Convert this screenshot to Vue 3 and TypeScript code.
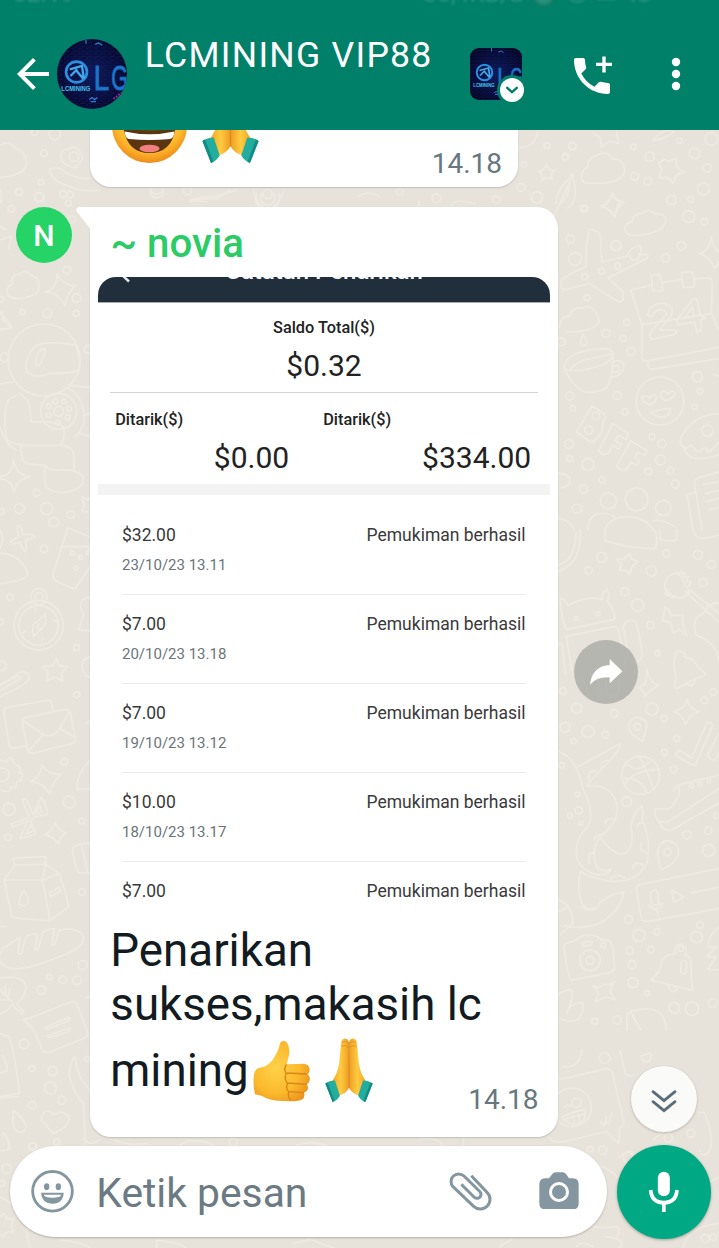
<script setup lang="ts">
interface Withdrawal {
  amount: string
  date?: string
}
interface DoodleGroup {
  x: number
  y: number
  paths: string[]
  dots: number[][]
}

const withdrawals: Withdrawal[] = [
  { amount: '$32.00', date: '23/10/23 13.11' },
  { amount: '$7.00', date: '20/10/23 13.18' },
  { amount: '$7.00', date: '19/10/23 13.12' },
  { amount: '$10.00', date: '18/10/23 13.17' },
  { amount: '$7.00' },
]

// Wallpaper line art, drawn in third-of-a-pixel units from each group's origin.
const doodles: DoodleGroup[] = [
  {
    x: 0,
    y: 0,
    paths: [
      'M0 436Q28 420 45 444Q76 452 80 490Q74 528 0 532',
      'M182 470Q182 446 206 448Q226 432 240 456Q256 470 238 490Q226 514 206 496Q186 494 182 470Z',
      'M150 508Q180 496 200 520Q240 540 268 536M150 508Q150 540 200 556Q250 580 300 570',
      'M570 600Q600 590 650 588L710 570M570 600L620 606',
      'M770 580A36 36 0 1 0 836 580M784 582A22 22 0 1 0 822 582',
    ],
    dots: [[164, 402, 17], [132, 460, 10], [222, 470, 14], [56, 575, 10], [123, 547, 8], [117, 592, 13], [470, 575, 19], [562, 572, 12], [189, 582, 10], [803, 582, 14], [104, 396, 10]],
  },
  {
    x: 359,
    y: 0,
    paths: [
      'M480 443Q530 442 537 392',
      'M590 610Q596 560 632 538L640 518L644 544Q660 600 626 624M604 612Q628 590 632 556',
      'M180 600V620M276 616Q290 594 350 612M412 586',
      'M0 590Q20 570 60 588M536 514Q556 516 562 492Q568 514 588 510Q572 522 580 538Q564 526 548 542Q556 522 536 514Z',
      'M742 606Q756 602 760 580Q766 602 790 604Q772 612 776 630',
    ],
    dots: [[564, 437, 9], [640, 438, 11], [495, 493, 8], [619, 470, 10], [486, 562, 12], [534, 592, 17], [122, 575, 10], [232, 594, 13], [412, 599, 11], [676, 625, 8]],
  },
  {
    x: 550,
    y: 130,
    paths: [
      'M128 10L150 22L154 52L178 34L206 40L200 8M308 32Q330 0 364 0M308 32Q350 26 372 4',
      'M102 158Q82 130 112 112Q112 82 144 74Q176 60 188 88Q220 84 224 120Q222 154 160 159Q120 162 102 158Z',
      'M343 88L358 94L379 84L380 110L402 126L380 134L370 160L352 142L327 144L336 120L326 98Z',
      'M152 230Q180 224 187 188Q192 216 222 218Q198 230 194 262Q184 236 152 230Z',
      'M230 310Q214 286 246 274Q250 250 276 250Q298 232 312 252Q346 248 348 272Q340 304 290 312Q250 322 230 310Z',
      'M118 300Q124 294 144 306Q154 316 152 352L156 396L232 378Q240 350 268 348Q280 352 268 374Q302 370 292 384L174 444L218 484Q226 516 206 516Q160 488 118 460L44 480Q28 472 36 448Q56 432 108 410Q106 350 118 300ZM240 378Q240 394 262 390L272 372',
      'M242 480L302 466M338 458L394 448M434 446L482 444Q488 450 486 480L484 550L276 584L242 480M276 584V684Q278 694 296 692L506 652M296 692Q290 714 304 718L506 686M484 550L506 600',
      'M304 440Q300 436 328 432Q340 470 338 480Q320 486 308 480ZM394 430Q400 424 426 426Q438 450 432 470Q410 476 400 470Z',
      'M292 556Q300 520 336 520Q370 524 366 552L330 600L378 600Q384 610 372 614L306 628Q294 620 304 604L350 552Q346 538 330 538Q316 540 306 560ZM430 506L380 570L384 584L434 576L440 606L452 602V570L466 564L450 556L442 508ZM428 530L402 566L430 560Z',
      'M28 594Q30 560 58 558Q66 530 100 534Q114 522 130 540Q152 560 146 578Q126 606 50 606M98 614Q114 628 110 642Q100 652 90 640Z',
      'M42 710Q50 670 120 660Q184 650 188 670Q194 700 110 718Q40 728 42 710ZM60 720Q80 690 130 684Q160 678 184 672M42 712Q60 760 98 784Q130 794 170 774Q188 750 188 676M190 696Q214 686 222 704Q220 736 182 744M192 708Q210 702 206 722Q200 728 188 726',
      'M302 824Q276 818 276 800Q294 796 300 804Q310 788 320 800Q322 812 302 824ZM346 812Q326 800 334 786Q348 780 354 792Q366 776 376 790Q370 808 346 812ZM304 846Q330 838 360 834Q366 850 346 860Q318 866 304 846Z',
      'M126 828L160 850Q172 864 158 880Q160 910 140 926Q130 940 118 934L80 906ZM188 880L236 912L228 928L206 916L196 932L214 944L206 958L188 946L176 968Q160 980 146 962ZM242 932L292 962L284 976L262 968L254 982L268 994L260 1006L244 996L228 1020Q212 1026 200 1008Z',
      'M506 852Q440 850 400 910Q380 940 402 950Q410 990 450 986Q484 984 506 974M402 950Q410 960 420 946Q434 950 436 962Q448 972 456 956Q470 950 474 966Q486 962 506 936',
      'M506 1026L444 1044Q430 1050 434 1068L456 1200M436 1086L414 1094Q408 1100 414 1110L428 1200M460 1064L506 1056M466 1090L506 1082M470 1114L506 1106M476 1140L506 1132',
      'M24 1030Q60 1030 60 1052Q58 1074 24 1074M114 1200Q112 1156 150 1150Q180 1148 196 1164M310 1172Q340 1166 374 1190M164 1200Q180 1160 234 1160Q290 1164 310 1200M24 1164Q60 1170 74 1200',
      'M450 370Q480 362 484 320Q490 360 506 364M450 370Q484 386 494 416L506 396M0 280Q20 240 60 156M486 732L506 738',
    ],
    dots: [[67, 47, 11], [46, 82, 9], [250, 50, 8], [389, 32, 8], [299, 80, 14], [434, 70, 16], [484, 27, 19], [471, 114, 12], [254, 139, 12], [293, 154, 12], [460, 177, 18], [364, 210, 14], [422, 208, 9], [416, 260, 18], [463, 275, 10], [102, 236, 11], [61, 327, 12], [198, 347, 15], [75, 387, 19], [394, 347, 13], [347, 384, 12], [104, 440, 9], [155, 423, 9], [203, 408, 9], [111, 503, 9], [230, 577, 9], [168, 610, 12], [219, 626, 9], [243, 664, 12], [34, 635, 12], [330, 813, 72], [442, 740, 15], [450, 784, 8], [434, 830, 8], [59, 798, 12], [69, 835, 8], [202, 797, 12], [225, 845, 9], [138, 857, 11], [116, 900, 12], [57, 942, 13], [59, 986, 9], [114, 1003, 18], [306, 920, 9], [336, 941, 12], [332, 990, 15], [295, 1024, 10], [361, 1022, 10], [156, 1050, 9], [376, 1062, 12], [100, 1077, 12], [80, 1136, 14], [175, 1113, 24], [260, 1108, 34], [340, 1134, 23], [472, 902, 17]],
  },
  {
    x: 550,
    y: 530,
    paths: [
      'M24 124Q92 100 90 20V0M24 106Q76 90 78 10M164 0V32Q240 56 316 56Q326 20 314 0M328 0L332 28Q356 36 380 30V0M430 0Q434 26 460 26L506 16',
      'M238 70L244 86L264 94L246 110L240 132L226 120L208 122L214 104L200 86L220 88Z',
      'M30 206Q40 200 54 226Q110 196 156 208Q156 180 172 180Q180 190 172 214Q196 240 194 268L50 298Q36 280 30 206ZM48 320L190 290Q206 290 210 320L226 400Q230 428 212 428M48 320L66 420M24 340L36 342L46 430M220 290Q226 268 250 272Q264 270 276 370Q276 396 256 394Q236 396 234 370ZM90 450Q106 444 116 500Q144 520 152 490L140 444M170 450Q164 500 190 498Q216 490 206 450',
      'M344 172Q346 128 386 130L406 164L418 186Q400 214 372 200Q350 196 344 172ZM406 184L506 276M420 180L506 250M386 136L394 124L404 132L400 144L414 140L410 156L424 156L416 168M352 180L344 192L356 198L360 188L366 204L376 196M506 218Q470 220 466 244Q456 256 440 262Q426 290 440 316Q500 340 506 392',
      'M346 230L358 244L364 256L400 256L398 280L410 318L388 298L370 310L362 278L338 272Z',
      'M376 380Q372 362 394 364Q408 368 404 382Q430 380 446 414L468 432Q460 440 436 446L380 476Q372 470 378 440Q366 400 376 380ZM410 460Q420 472 432 462L436 446',
      'M266 472Q296 466 290 418Q300 462 328 466Q300 478 286 500Q282 480 266 472ZM372 544Q404 538 412 508Q416 538 448 544Q418 554 406 584Q402 558 372 544Z',
      'M278 634Q240 614 236 594Q236 564 264 562Q292 566 290 592ZM334 1020Q324 990 322 970Q326 934 354 932Q388 940 386 972Q376 1002 334 1020Z',
      'M376 674L388 660L424 684L472 578Q484 574 488 586L436 706Q410 700 376 674ZM506 610L472 676Q480 690 496 690L506 668',
      'M226 696Q260 736 300 694M226 760Q250 720 330 718M268 680Q300 740 310 780M220 746Q270 740 290 788',
      'M372 780L382 766Q440 750 506 736M382 766Q394 780 384 800Q370 834 350 838L318 836Q306 850 330 880Q340 900 360 902L506 820M330 874L350 878L506 776',
      'M80 712Q140 680 208 642Q220 650 160 712Q130 740 110 768Q190 760 202 830Q204 880 150 920Q120 960 140 1010Q160 1030 182 1018Q180 1036 140 1034Q90 1020 80 980Q74 930 108 896Q140 860 100 780Q80 680 24 664M150 920Q190 980 226 970Q256 950 242 890Q250 846 276 828Q280 850 276 870Q306 930 290 1000Q260 1060 180 1054Q120 1044 92 1024Q80 1060 94 1120Q130 1160 150 1118Q180 1090 222 1086Q210 1150 140 1184Q80 1200 42 1186',
      'M154 712Q154 690 174 692M116 748Q114 720 138 722M166 880Q170 860 198 870M132 930Q136 912 160 914M118 1000Q110 970 132 968M180 1052Q194 1024 226 1044M248 1014Q254 990 280 1006M288 968Q264 960 274 938M262 890Q264 876 280 880M92 1130Q110 1144 128 1134M24 1108Q70 1130 68 1180L32 1214M24 1146Q44 1140 54 1126',
      'M268 1064L506 1016M268 1064Q256 1070 260 1086L274 1164Q276 1176 296 1174L506 1136M314 1080Q326 1080 324 1104L328 1122Q318 1130 306 1122L302 1100Q300 1082 314 1080ZM296 1124Q320 1154 338 1120M320 1136L324 1150M364 1080L402 1102L372 1116ZM424 1088L506 1072',
      'M48 1240L82 1230L90 1220Q116 1210 144 1220L150 1228L176 1232Q190 1236 194 1314Q192 1326 170 1330L66 1350Q54 1350 42 1256Q42 1244 48 1240ZM94 1240Q110 1232 126 1236Q130 1244 116 1246Q100 1252 94 1240Z',
      'M376 1272Q372 1242 394 1242Q414 1250 406 1274Q426 1280 424 1310Q424 1350 428 1382L302 1350Q330 1330 334 1300Q340 1272 376 1272ZM354 1366Q368 1400 382 1374M394 1296Q404 1286 410 1298Q412 1320 404 1332Q388 1334 392 1318Z',
      'M130 1366Q150 1378 164 1362Q182 1370 192 1354Q182 1380 180 1386Q190 1400 196 1410Q176 1400 164 1402Q150 1410 136 1416Q146 1394 144 1386Z',
      'M24 1394Q50 1376 66 1382Q70 1410 50 1450Q60 1420 96 1416Q106 1440 84 1468Q60 1480 30 1466M232 1500Q226 1446 242 1444Q300 1426 330 1450Q350 1470 348 1500M272 1500Q256 1470 242 1446M506 1192Q470 1220 476 1252L500 1250L470 1280L498 1282L474 1318L506 1320',
    ],
    dots: [[349, 70, 11], [444, 74, 13], [483, 103, 12], [155, 82, 15], [116, 121, 11], [304, 123, 15], [460, 158, 12], [225, 185, 12], [263, 225, 18], [301, 285, 11], [79, 265, 6], [144, 252, 6], [323, 370, 8], [39, 483, 10], [489, 486, 10], [463, 511, 10], [80, 535, 15], [193, 550, 11], [306, 537, 18], [342, 566, 9], [45, 592, 15], [114, 605, 18], [166, 614, 10], [71, 633, 8], [262, 590, 10], [380, 626, 9], [343, 667, 9], [272, 736, 57], [371, 718, 10], [36, 706, 8], [230, 815, 15], [83, 793, 7], [86, 841, 11], [60, 857, 7], [93, 880, 6], [411, 915, 12], [475, 902, 11], [476, 961, 18], [353, 966, 11], [424, 767, 6], [450, 762, 6], [476, 753, 6], [498, 857, 8], [236, 1168, 12], [267, 1216, 18], [321, 1205, 9], [239, 1262, 11], [303, 1259, 10], [246, 1304, 12], [249, 1358, 15], [291, 1389, 7], [120, 1291, 31], [120, 1291, 12], [160, 1245, 7], [392, 1256, 8], [440, 1221, 17], [450, 1185, 10], [373, 1433, 16], [426, 1436, 20], [488, 1419, 13], [134, 1474, 9], [201, 1470, 12]],
  },
  {
    x: 0,
    y: 190,
    paths: [
      'M26 318Q12 296 34 284Q34 252 60 252Q78 236 92 256Q120 266 116 286Q120 316 70 324Q40 330 26 318Z',
      'M134 306Q170 300 172 252Q190 290 228 286Q202 304 194 348Q174 306 134 306Z',
      'M0 150L34 138L26 176M0 110L20 120M0 366Q24 392 36 414L0 418M0 0Q10 20 0 40',
      'M450 0Q470 24 490 0M570 36Q600 24 650 26L690 0M760 0Q770 40 790 50M850 0Q850 20 822 50',
    ],
    dots: [[201, 240, 11], [230, 324, 13], [68, 366, 8], [142, 370, 13], [229, 370, 9], [210, 14, 10], [118, 22, 14], [57, 6, 10], [205, 40, 9], [216, 88, 10], [34, 56, 10], [4, 328, 8]],
  },
  {
    x: 0,
    y: 260,
    paths: [
      'M80 334Q70 290 110 256Q150 240 226 256Q246 300 236 332Q200 342 150 340Q100 360 80 334ZM108 300Q110 270 134 266Q140 276 130 290Q122 316 110 318Q106 314 108 300Z',
      'M0 372L38 366M206 376L270 382M206 386Q240 400 250 450Q260 500 226 530M48 408Q20 410 16 450Q12 520 22 540Q40 556 90 556H180Q200 530 188 500Q180 484 92 486Q94 420 70 410L60 400M0 500Q20 560 50 570M64 558Q60 610 90 612L134 616M188 556Q220 560 222 590V628M134 616V670Q140 696 190 698Q250 690 250 654Q240 628 180 630Q150 634 134 616M240 520L270 530M250 466L270 460',
      'M0 650Q38 646 40 600Q48 646 92 650Q50 656 42 696Q36 660 0 656',
      'M54 796Q66 796 68 824Q104 820 106 832L76 842Q84 872 74 876L58 846Q34 858 30 846L56 830Q48 800 54 796Z',
      'M204 804L270 830M204 804L160 940Q156 956 170 964L224 988L270 920M184 860H270M0 880Q60 880 84 940Q90 958 0 972M0 810Q16 840 0 864',
      'M136 1062L98 1096L100 1130L136 1094ZM118 1090L112 1104L124 1110M106 1044L108 1056M68 1118L78 1112M126 1146L128 1136M160 1080L170 1084',
      'M170 1196L176 1216L202 1220L184 1240L188 1264L164 1252L140 1262L144 1238L130 1218L156 1218Z',
      'M0 1276L64 1234Q90 1236 86 1258Q80 1274 0 1310M0 1292L60 1256Q64 1244 50 1250L0 1276M270 1012Q240 1014 242 1040L250 1066L236 1110L270 1112M246 710L264 720L270 712M246 710L254 736L246 754L270 756M270 1190Q240 1200 248 1230Q256 1250 270 1252M0 210L34 204L10 180L6 154M270 860L262 880',
    ],
    dots: [[132, 300, 108], [176, 454, 54], [176, 454, 15], [146, 438, 7], [166, 424, 7], [192, 424, 7], [208, 446, 7], [203, 472, 7], [146, 466, 7], [174, 488, 7], [14, 292, 13], [110, 698, 10], [58, 746, 15], [140, 746, 18], [212, 764, 11], [161, 786, 14], [132, 867, 11], [4, 754, 8], [217, 880, 6], [241, 892, 6], [227, 924, 6], [262, 880, 5], [117, 1010, 24], [117, 1010, 12], [116, 1096, 74], [116, 1096, 59], [30, 1011, 10], [230, 1163, 9], [2, 1085, 8], [230, 1304, 9], [4, 1218, 14], [264, 268, 12]],
  },
  {
    x: 0,
    y: 700,
    paths: [
      'M66 62Q64 56 80 52L196 28Q208 28 212 40L226 120Q224 130 212 132L96 160Q86 160 82 146ZM66 60L130 104Q160 114 176 90L210 34M86 154L128 104M222 110L178 84M12 38Q10 24 24 22L146 0Q158 6 158 34M12 38L28 136Q32 148 50 144L76 138',
      'M0 180L20 186L26 176L34 172L42 190L60 202L58 218L68 222L64 240L50 246L48 262L34 262L26 276L0 270M0 204Q28 204 28 222Q26 244 0 244',
      'M94 244Q122 230 126 194Q146 228 184 222Q156 244 150 284Q132 248 94 244ZM134 404Q162 390 166 368Q176 394 198 398Q178 410 176 432Q162 410 134 404Z',
      'M34 372L90 352L66 300L78 296L100 344L124 290Q144 330 142 344L106 350L90 362L108 398Q108 404 60 416L82 364L36 382ZM104 342L120 318L128 336ZM78 402L92 374L100 392Z',
      'M40 474L136 470V492L44 496ZM44 496L12 540L36 650Q40 656 150 662L206 620Q204 600 178 520L136 492M12 540H128L150 662M128 540L178 520M128 540L136 494M72 572Q86 596 86 606Q74 626 58 612Q54 596 72 572ZM148 578L178 562L182 572L152 590Z',
      'M0 760Q10 740 60 712L54 760L64 762L78 712Q90 700 112 702L106 750L114 750L128 696Q140 688 164 686L156 734L164 736L178 690Q240 680 250 710Q256 740 190 766Q60 820 20 802Q0 790 0 780M0 680H20',
      'M0 834Q60 824 76 850Q84 880 50 912L72 936L66 942L36 914Q20 934 0 942M0 868L40 910M14 858L18 880M0 900L30 900M30 866L24 888',
      'M70 960L96 952L206 908Q226 900 230 912L264 1000Q264 1010 246 1018L142 1058Q130 1058 126 1048L98 984ZM134 982L208 952Q212 958 204 964L138 988ZM142 1008L208 984Q212 992 202 996L148 1014Z',
      'M0 1000L30 1012Q50 1100 58 1180L0 1190M6 1066Q24 1090 20 1114L0 1118M0 1194L56 1190',
      'M222 1070Q206 1100 208 1130Q220 1180 250 1210L256 1340M226 1072Q228 1130 270 1170',
      'M40 1230Q76 1260 78 1280Q74 1304 50 1294Q34 1280 40 1230ZM160 1300L124 1262Q124 1228 150 1234Q164 1250 176 1236Q210 1238 206 1262Q200 1284 160 1300ZM12 1300Q36 1330 28 1350',
      'M270 182Q230 220 230 268L270 266M270 430Q210 430 218 460Q226 500 234 518L270 520M246 440L264 520M258 70L270 64M256 894L270 890',
    ],
    dots: [[193, 185, 10], [208, 306, 18], [27, 328, 18], [245, 363, 9], [24, 412, 9], [246, 576, 10], [248, 795, 14], [231, 841, 13], [188, 839, 11], [148, 831, 8], [124, 870, 13], [72, 1032, 14], [96, 1105, 9], [158, 1113, 14], [151, 1164, 18], [185, 1201, 12], [96, 1216, 11], [262, 1076, 7], [98, 1338, 10]],
  },
  {
    x: 420,
    y: 1050,
    paths: [
      'M414 90L560 56Q574 56 580 80L612 220Q610 230 600 234L596 282L560 244L430 276Q394 278 388 262M428 202Q440 190 494 178Q500 210 480 220Q450 230 428 202ZM434 172Q440 160 452 168M440 206L492 192M540 216L552 226L560 202M556 216L566 222L576 190M458 196L464 224M476 192L480 220',
      'M600 0L616 70Q618 80 640 76M664 16L692 10Q696 34 680 36Q666 34 664 16ZM430 50Q480 54 486 0',
      'M836 190Q856 180 858 200L868 230Q880 270 870 300Q850 330 840 300M700 270Q740 230 770 236',
      'M600 324Q620 290 640 320M540 350Q560 350 590 380M560 560Q620 566 600 594M470 590Q480 570 520 590M790 594Q800 530 900 520M520 530Q560 536 590 530Q606 546 590 560M0 266Q60 260 70 290M130 262V286M240 588L276 568M860 400L897 380',
    ],
    dots: [[456, 172, 58], [470, 158, 14], [554, 24, 16], [548, 300, 12], [510, 298, 9], [745, 264, 12], [812, 250, 12], [856, 566, 12], [880, 562, 10], [628, 322, 18]],
  },
  {
    x: 0,
    y: 1130,
    paths: [
      'M10 10Q34 40 22 60L0 62M0 260L12 250L22 268L40 266L34 290L40 306L20 306L8 320L0 312M0 200L34 220M90 354L78 300Q80 290 110 296M180 330Q260 340 270 354M470 354V330L530 340L560 354M880 340L930 328L1000 354M250 26Q270 50 300 30M340 30Q400 50 440 40M540 44Q580 20 640 44M890 46Q930 30 980 46',
    ],
    dots: [[98, 50, 12], [20, 116, 14], [170, 36, 9], [700, 36, 12], [6, 160, 9]],
  },
]
</script>

<template>
  <div class="screen">
    <svg class="defs" width="0" height="0" aria-hidden="true">
      <defs>
        <radialGradient id="skin" cx=".4" cy=".45" r=".7">
          <stop offset="0" stop-color="#ffd24a" />
          <stop offset=".6" stop-color="#fbb92d" />
          <stop offset="1" stop-color="#e98f1c" />
        </radialGradient>
        <linearGradient id="handL" x1="0" x2="1">
          <stop offset="0" stop-color="#f2a31f" />
          <stop offset=".5" stop-color="#ffcb40" />
          <stop offset="1" stop-color="#ee9c24" />
        </linearGradient>
        <radialGradient id="face" cx=".5" cy=".4" r=".6">
          <stop offset="0" stop-color="#ffdf4f" />
          <stop offset=".75" stop-color="#fdb92c" />
          <stop offset="1" stop-color="#ef8b1b" />
        </radialGradient>
        <radialGradient id="night" cx=".5" cy=".5" r=".7">
          <stop offset="0" stop-color="#0a1a55" />
          <stop offset=".6" stop-color="#060a34" />
          <stop offset="1" stop-color="#030316" />
        </radialGradient>
        <pattern id="bricks" width="22" height="14" patternUnits="userSpaceOnUse">
          <path d="M0 1H13M16 8H22M2 8H6" stroke="#16399a" stroke-width="2" opacity=".5" />
          <path d="M17 3H20M9 11H12" stroke="#3c1470" stroke-width="2" />
        </pattern>
      </defs>
      <symbol id="pray" viewBox="705 353 145 193">
        <g id="prayHand">
          <path d="M777 364Q773 353 762 355Q753 358 753 374L748 428Q744 458 726 484L744 528Q770 520 778 502Z" fill="url(#handL)" />
          <path d="M755 378Q766 372 777 382M757 366Q768 360 776 368" fill="none" stroke="#e39420" stroke-width="3" />
          <path d="M706 490Q718 481 735 481L750 527Q742 541 728 546Z" fill="#23ad9f" />
          <path d="M706 490L728 546L734 543L713 487Z" fill="#128c82" />
        </g>
        <use href="#prayHand" transform="translate(1555 0) scale(-1 1)" />
        <path d="M777.500 366V504" stroke="#d98a1c" stroke-width="3" />
      </symbol>
      <symbol id="avatarArt" viewBox="172 118 208 208">
        <rect x="172" y="118" width="208" height="208" fill="url(#night)" />
        <rect x="172" y="118" width="208" height="208" fill="url(#bricks)" />
        <path d="M258 118V132M285 134L296 130L306 136" stroke="#2b79b8" stroke-width="4" fill="none" />
        <path d="M340 296L362 280M346 304L366 290M354 284L372 274" stroke="#a8209c" stroke-width="6" stroke-dasharray="5 4" />
        <path d="M268 298L276 292L284 298L292 292M272 304H288" stroke="#2f7bd8" stroke-width="4" fill="none" />
        <circle cx="230" cy="216" r="31" fill="none" stroke="#2c8fe0" stroke-width="8" />
        <path d="M212 228L232 208M210 208L246 198L252 236M230 212L250 236" fill="none" stroke="#41a8ea" stroke-width="7" />
        <text x="185" y="272" textLength="86" lengthAdjust="spacingAndGlyphs" class="art-name">LCMINING</text>
        <text x="281" y="269" textLength="46" lengthAdjust="spacingAndGlyphs" class="art-big">L</text>
        <text x="333" y="269" textLength="50" lengthAdjust="spacingAndGlyphs" class="art-big">G</text>
      </symbol>
    </svg>

    <svg class="wallpaper" viewBox="0 0 719 1248" aria-hidden="true">
      <g v-for="(g, i) in doodles" :key="i" :transform="`translate(${g.x} ${g.y}) scale(.33333)`">
        <path v-for="(p, j) in g.paths" :key="'p' + j" :d="p" />
        <circle v-for="(c, k) in g.dots" :key="'c' + k" :cx="c[0]" :cy="c[1]" :r="c[2]" />
      </g>
    </svg>

    <header class="topbar">
      <div class="status" aria-hidden="true">
        <span>02.19</span>
        <span class="status-right">36,4KB/d ⏰ ⦿ ▭ 48</span>
      </div>
      <svg class="back" viewBox="0 0 24 24"><path d="M20 11H7.830l5.590-5.590L12 4l-8 8 8 8 1.410-1.410L7.830 13H20v-2z" /></svg>
      <svg class="avatar"><use href="#avatarArt" /></svg>
      <h1>LCMINING VIP88</h1>
      <div class="community">
        <svg class="community-art"><use href="#avatarArt" /></svg>
        <svg class="badge" viewBox="0 0 30 30">
          <circle cx="15" cy="15" r="15" fill="#008069" />
          <circle cx="15" cy="15" r="12" fill="#fff" />
          <path d="M10.200 12.800L15 17.200L19.800 12.800" fill="none" stroke="#008069" stroke-width="2.400" stroke-linecap="round" />
        </svg>
      </div>
      <svg class="call" viewBox="0 0 24 24">
        <path d="M20 15.500c-1.250 0-2.450-.2-3.570-.57-.35-.11-.74-.03-1.020.24l-2.200 2.200c-2.830-1.440-5.150-3.750-6.590-6.590l2.200-2.210c.28-.26.36-.65.25-1C8.700 6.450 8.500 5.250 8.500 4c0-.55-.45-1-1-1H4c-.55 0-1 .45-1 1 0 9.390 7.610 17 17 17 .55 0 1-.45 1-1v-3.500c0-.55-.45-1-1-1z" />
        <path transform="translate(1 -.8)" d="M21 6.150h-3.150V3h-1.700v3.150H13v1.700h3.150V11h1.700V7.850H21z" />
      </svg>
      <svg class="more" viewBox="0 0 48 48"><circle cx="24" cy="12" r="4.200" /><circle cx="24" cy="24" r="4.200" /><circle cx="24" cy="36" r="4.200" /></svg>
    </header>

    <main class="chat">
      <section class="bubble first">
        <svg class="grin" viewBox="0 0 75 75">
          <circle cx="37.500" cy="37.500" r="37.500" fill="url(#face)" />
          <path d="M11 35H64Q62 65 37.500 65Q13 65 11 35Z" fill="#5b3410" />
          <path d="M12.500 43.500Q37.500 49 62.500 43.500Q62 50 58 51Q37.500 53 17 51Q13 50 12.500 43.500Z" fill="#fff" />
          <path d="M12 40Q37.500 46 63 40V35H12Z" fill="#5a4a10" />
          <ellipse cx="37.500" cy="60.500" rx="10" ry="3.800" fill="#f08080" />
        </svg>
        <svg class="pray-large"><use href="#pray" /></svg>
        <time>14.18</time>
      </section>

      <section class="message">
        <div class="sender">N</div>
        <div class="bubble main">
          <svg class="tail" viewBox="0 0 14 24"><path d="M15 0H3Q-1.500 1 .8 5L15 23Z" fill="#fff" /></svg>
          <div class="name">~ novia</div>
          <div class="shot">
            <div class="shot-bar">
              <svg class="shot-back" viewBox="0 0 10 8"><path d="M0 -2L7 4.500" stroke="#e8edf2" stroke-width="2.400" /></svg>
              <div class="shot-title">Catatan Penarikan</div>
            </div>
            <div class="balance">
              <b>Saldo Total($)</b>
              <span class="money">$0.32</span>
            </div>
            <div class="totals">
              <div><b>Ditarik($)</b><span class="money">$0.00</span></div>
              <div><b>Ditarik($)</b><span class="money">$334.00</span></div>
            </div>
            <div class="band"></div>
            <ul>
              <li v-for="(w, i) in withdrawals" :key="i">
                <div class="entry"><span>{{ w.amount }}</span><span>Pemukiman berhasil</span></div>
                <div v-if="w.date" class="date">{{ w.date }}</div>
              </li>
            </ul>
          </div>
          <div class="caption">
            <div>Penarikan</div>
            <div>sukses,makasih lc</div>
            <div class="last">
              <span>mining</span>
              <svg class="thumb" viewBox="487 359 171 186">
                <path d="M568 368Q576 357 588 366Q599 380 595 405L588 432L640 430Q656 432 657 448Q657 458 650 461Q660 468 657 480Q655 490 648 492Q655 500 650 510Q646 516 640 517Q644 530 635 537Q625 543 600 543L560 541Q530 538 515 527L493 522Q487 500 489 470Q491 445 505 443Q530 440 545 420Q562 395 566 378Z" fill="url(#skin)" />
                <path d="M588 432Q578 444 586 458L650 461M586 460Q580 476 590 488L648 492M590 490Q584 504 594 514L640 517M594 516Q590 528 600 540" fill="none" stroke="#d98518" stroke-width="4" />
              </svg>
              <svg class="pray-small"><use href="#pray" /></svg>
              <time>14.18</time>
            </div>
          </div>
        </div>
        <button class="forward" aria-label="Forward">
          <svg viewBox="72 330 192 192"><path d="M121 462Q128 408 180 406V389L216 424L180 458V441Q140 438 121 462Z" fill="#fff" stroke="#fff" stroke-width="2" stroke-linejoin="round" /></svg>
        </button>
      </section>
    </main>

    <button class="to-bottom" aria-label="Scroll to latest">
      <svg viewBox="634 47 198 198"><path d="M700 124L733 151L766 124M700 154L733 181L766 154" fill="none" stroke="#5b6d77" stroke-width="8.500" stroke-linecap="round" /></svg>
    </button>

    <footer class="composer">
      <div class="field">
        <svg class="smile" viewBox="93 122 129 129">
          <circle cx="157.500" cy="186" r="59.500" fill="none" stroke="#8496a0" stroke-width="8.500" />
          <ellipse cx="140" cy="172" rx="8" ry="10" fill="#8496a0" />
          <ellipse cx="175" cy="172" rx="8" ry="10" fill="#8496a0" />
          <path d="M123 190H191Q190 222 157 223Q125 222 123 190Z" fill="#8496a0" />
          <path d="M131 196H184Q182 205 157 205Q134 205 131 196Z" fill="#fff" />
        </svg>
        <span class="hint">Ketik pesan</span>
        <svg class="clip" viewBox="88 368 129 116">
          <path d="M155 379L202 429A29 29 0 0 1 162 471L100 412A23 23 0 0 1 133 380L181 427A12 12 0 0 1 163 443L125 405" fill="none" stroke="#8496a0" stroke-width="9" />
        </svg>
        <svg class="camera" viewBox="356 365 120 113">
          <path d="M375 384H386L396 371Q400 366 406 366H427Q433 366 437 371L446 384H457Q475 384 475 402V459Q475 477 457 477H375Q357 477 357 459V402Q357 384 375 384Z" fill="#8496a0" />
          <circle cx="416" cy="425" r="25.500" fill="none" stroke="#fff" stroke-width="9" />
        </svg>
      </div>
      <button class="mic" aria-label="Record voice message">
        <svg viewBox="592 285 282 282">
          <rect x="714.500" y="365" width="36" height="74" rx="18" fill="#fff" />
          <path d="M693 420Q696 458 732.500 458Q769 458 772 420M732.500 458V486" fill="none" stroke="#fff" stroke-width="11" />
        </svg>
      </button>
    </footer>
  </div>
</template>

<style>
body {
  margin: 0;
}
</style>

<style scoped>
.screen {
  position: relative;
  display: flex;
  flex-direction: column;
  width: 719px;
  height: 1248px;
  overflow: hidden;
  background: #e7e3da;
  font-family: Roboto, "Liberation Sans", sans-serif;
}
.screen * {
  box-sizing: border-box;
}
svg {
  display: block;
  flex: none;
}
button {
  padding: 0;
  border: 0;
  border-radius: 50%;
  flex: none;
}
button svg {
  width: 100%;
  height: 100%;
}
.defs {
  position: absolute;
}
.wallpaper {
  position: absolute;
  inset: 0;
  width: 719px;
  height: 1248px;
  fill: none;
  stroke: #eeeae2;
  stroke-width: 5;
  stroke-linejoin: round;
  stroke-linecap: round;
}
.art-name {
  font: bold 24px "Liberation Sans", sans-serif;
  fill: #45c4ee;
}
.art-big {
  font: 104px "Liberation Sans", sans-serif;
  fill: #1c78cc;
  stroke: #1b6fc0;
  stroke-width: 3;
}

.topbar {
  position: relative;
  display: flex;
  align-items: center;
  flex: none;
  height: 130px;
  padding: 18px 19px 0 9.300px;
  background: #008069;
  fill: #fff;
  overflow: hidden;
}
.status {
  position: absolute;
  top: -20px;
  left: 13px;
  right: 68px;
  display: flex;
  justify-content: space-between;
  color: #fff;
  opacity: .14;
  font-size: 24px;
  font-weight: 500;
  line-height: 28px;
  filter: blur(.8px);
}
.back {
  width: 48px;
  height: 48px;
}
.avatar {
  width: 70px;
  height: 70px;
  border-radius: 50%;
}
h1 {
  align-self: flex-start;
  margin: 14.800px 0 0 17.500px;
  color: #fff;
  font-size: 35.600px;
  font-weight: 400;
  line-height: 44px;
  letter-spacing: 1.260px;
  white-space: nowrap;
}
.community {
  position: relative;
  width: 52px;
  height: 52px;
  margin-left: auto;
}
.community-art {
  width: 52px;
  height: 52px;
  border-radius: 9px;
}
.badge {
  position: absolute;
  left: 27px;
  top: 27px;
  width: 30px;
  height: 30px;
}
.call {
  width: 48px;
  height: 48px;
  margin: 3px 0 0 46px;
}
.more {
  width: 48px;
  height: 48px;
  margin-left: 36px;
}

.chat {
  position: relative;
  flex: 1;
  min-height: 0;
  overflow: hidden;
}
.bubble {
  background: #fff;
  box-shadow: 0 1px 1.500px rgba(60, 60, 50, .22);
}
time {
  margin-left: auto;
  color: #667781;
  font-size: 28px;
  line-height: 32px;
}
.first {
  display: flex;
  align-items: flex-end;
  width: 428px;
  height: 57px;
  margin-left: 90px;
  padding: 0 16px 7px 22px;
  border-radius: 0 0 21px 21px;
  overflow: hidden;
}
.grin {
  width: 75px;
  height: 75px;
  margin-bottom: 17px;
}
.pray-large {
  width: 57px;
  height: 76px;
  margin: 0 0 17px 15px;
}
.message {
  display: flex;
  margin-top: 20px;
  padding-left: 16px;
}
.sender {
  flex: none;
  width: 56px;
  height: 56px;
  border-radius: 50%;
  background: #25d366;
  color: #fff;
  font-size: 30px;
  font-weight: 500;
  line-height: 57px;
  text-align: center;
}
.main {
  position: relative;
  flex: none;
  width: 468px;
  height: 929.500px;
  margin-left: 18px;
  padding: 0 8px;
  border-radius: 0 21px 21px 21px;
}
.tail {
  position: absolute;
  left: -14px;
  top: 0;
  width: 14.500px;
  height: 24px;
}
.name {
  height: 70px;
  padding-left: 12.500px;
  color: #2bcc66;
  font-size: 40.200px;
  font-weight: 500;
  line-height: 74px;
}
.shot {
  height: 643px;
  border-radius: 18px 18px 0 0;
  overflow: hidden;
  color: #222;
}
.shot-bar {
  position: relative;
  height: 26px;
  border-bottom: 1px solid #a5abb1;
  background: #212e3b;
  overflow: hidden;
}
.shot-title {
  margin-top: -18px;
  color: #f4f6f8;
  font-size: 24px;
  font-weight: 500;
  line-height: 24px;
  text-align: center;
}
.shot-back {
  position: absolute;
  left: 24px;
  top: 0;
  width: 10px;
  height: 8px;
}
b {
  display: block;
  font-size: 16.300px;
  font-weight: 500;
  line-height: 20px;
}
.money {
  display: block;
  margin-top: 10px;
  font-size: 30px;
  line-height: 36px;
}
.balance {
  height: 90px;
  margin: 0 12px;
  padding-top: 15px;
  border-bottom: 1.500px solid #d4d4d4;
  text-align: center;
}
.totals {
  display: grid;
  grid-template-columns: 174px 208px;
  column-gap: 34px;
  height: 91px;
  padding: 16.500px 0 0 17.200px;
}
.totals .money {
  text-align: right;
}
.band {
  height: 11px;
  background: #f3f3f3;
}
ul {
  margin: 11px 24.500px 0 24px;
  padding: 0;
  list-style: none;
}
li {
  height: 89.100px;
  padding-top: 17.500px;
  border-bottom: 1.500px solid #ebebeb;
}
.entry {
  display: flex;
  justify-content: space-between;
  color: #3a3a3a;
  font-size: 17.500px;
  line-height: 22px;
}
.date {
  margin-top: 9px;
  color: #6c747a;
  font-size: 15px;
  line-height: 20px;
}
.caption {
  padding: 4px 11.500px 0 12.300px;
  color: #111b21;
  font-size: 45.700px;
  line-height: 54px;
  white-space: nowrap;
}
.last {
  display: flex;
  height: 72px;
  margin-top: 12px;
}
.thumb {
  width: 57px;
  height: 62px;
  margin: -4px 0 0 4px;
}
.pray-small {
  width: 48px;
  height: 64px;
  margin: -6px 0 0 15px;
}
.last time {
  align-self: flex-end;
}
.forward {
  align-self: center;
  width: 64px;
  height: 64px;
  margin-left: 16px;
  background: rgba(166, 167, 162, .75);
}
.to-bottom {
  position: absolute;
  left: 631px;
  top: 1065.500px;
  width: 66px;
  height: 66px;
  background: #fafaf8;
  box-shadow: 0 1px 3px rgba(0, 0, 0, .2);
}

.composer {
  position: relative;
  display: flex;
  flex: none;
  height: 102px;
  padding-left: 10px;
}
.field {
  display: flex;
  align-items: center;
  width: 597px;
  height: 91px;
  padding: 0 28.500px 0 21px;
  border-radius: 46px;
  background: #fff;
  box-shadow: 0 1px 2px rgba(60, 60, 50, .3);
}
.smile {
  width: 43px;
  height: 43px;
}
.hint {
  flex: 1;
  margin-left: 22.300px;
  padding-top: 2px;
  color: #6b7a83;
  font-size: 40.800px;
  line-height: 48px;
}
.clip {
  width: 43px;
  height: 38.700px;
}
.camera {
  width: 40px;
  height: 37.700px;
  margin: -2px 0 0 47px;
}
.mic {
  width: 94px;
  height: 94px;
  margin: -1px 0 0 10px;
  background: #00a884;
  box-shadow: 0 1px 3px rgba(0, 0, 0, .3);
}
</style>
